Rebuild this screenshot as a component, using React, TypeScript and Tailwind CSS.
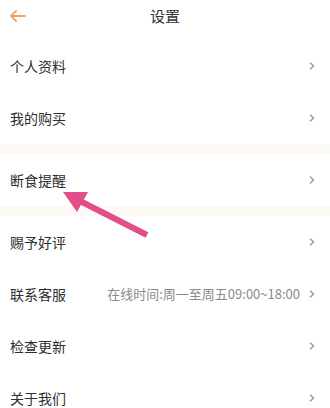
import React from 'react';

const font = { fontFamily: '"Noto Sans CJK SC", "Noto Sans", sans-serif' };

function Chevron() {
  return (
    <svg width="8" height="10" viewBox="0 0 8 10" className="shrink-0">
      <path d="M2.5 2 L5.5 5 L2.5 8" fill="none" stroke="#a0a0a0" strokeWidth="1.6" strokeLinecap="round" strokeLinejoin="round" />
    </svg>
  );
}

function Row({ label, extra }: { label: string; extra?: string }) {
  return (
    <div className="h-[52px] flex items-center pl-[10px] pr-[14px] bg-white">
      <span className="text-[14px] text-[#2e2e2e] flex-1">{label}</span>
      {extra && <span className="text-[13px] text-[#8a8a8a] mr-[8px]">{extra}</span>}
      <Chevron />
    </div>
  );
}

function Gap() {
  return <div className="h-[10px] bg-[#fdfaf6]" />;
}

export default function App() {
  return (
    <div className="relative w-[330px] h-[408px] bg-white overflow-hidden" style={font}>
      {/* Header */}
      <div className="h-[40px] pb-[8px] flex items-center relative">
        <svg width="18" height="14" viewBox="0 0 18 14" className="ml-[9px]">
          <path d="M16 7 H2 M7 2 L2 7 L7 12" fill="none" stroke="#f0a46a" strokeWidth="1.8" strokeLinecap="round" strokeLinejoin="round" />
        </svg>
        <div className="absolute left-0 right-0 top-0 h-[32px] flex items-center justify-center text-[15px] text-[#333]">
          设置
        </div>
      </div>

      <Row label="个人资料" />
      <Row label="我的购买" />
      <Gap />
      <Row label="断食提醒" />
      <Gap />
      <Row label="赐予好评" />
      <Row label="联系客服" extra="在线时间:周一至周五09:00~18:00" />
      <Row label="检查更新" />
      <Row label="关于我们" />

      {/* Pink annotation arrow */}
      <svg className="absolute left-0 top-0 pointer-events-none" width="330" height="408" viewBox="0 0 330 408">
        <line x1="80" y1="201" x2="147" y2="235" stroke="#e24e8a" strokeWidth="6" strokeLinecap="butt" />
        <polygon points="63,192 88,192 77,212" fill="#e24e8a" />
      </svg>
    </div>
  );
}
